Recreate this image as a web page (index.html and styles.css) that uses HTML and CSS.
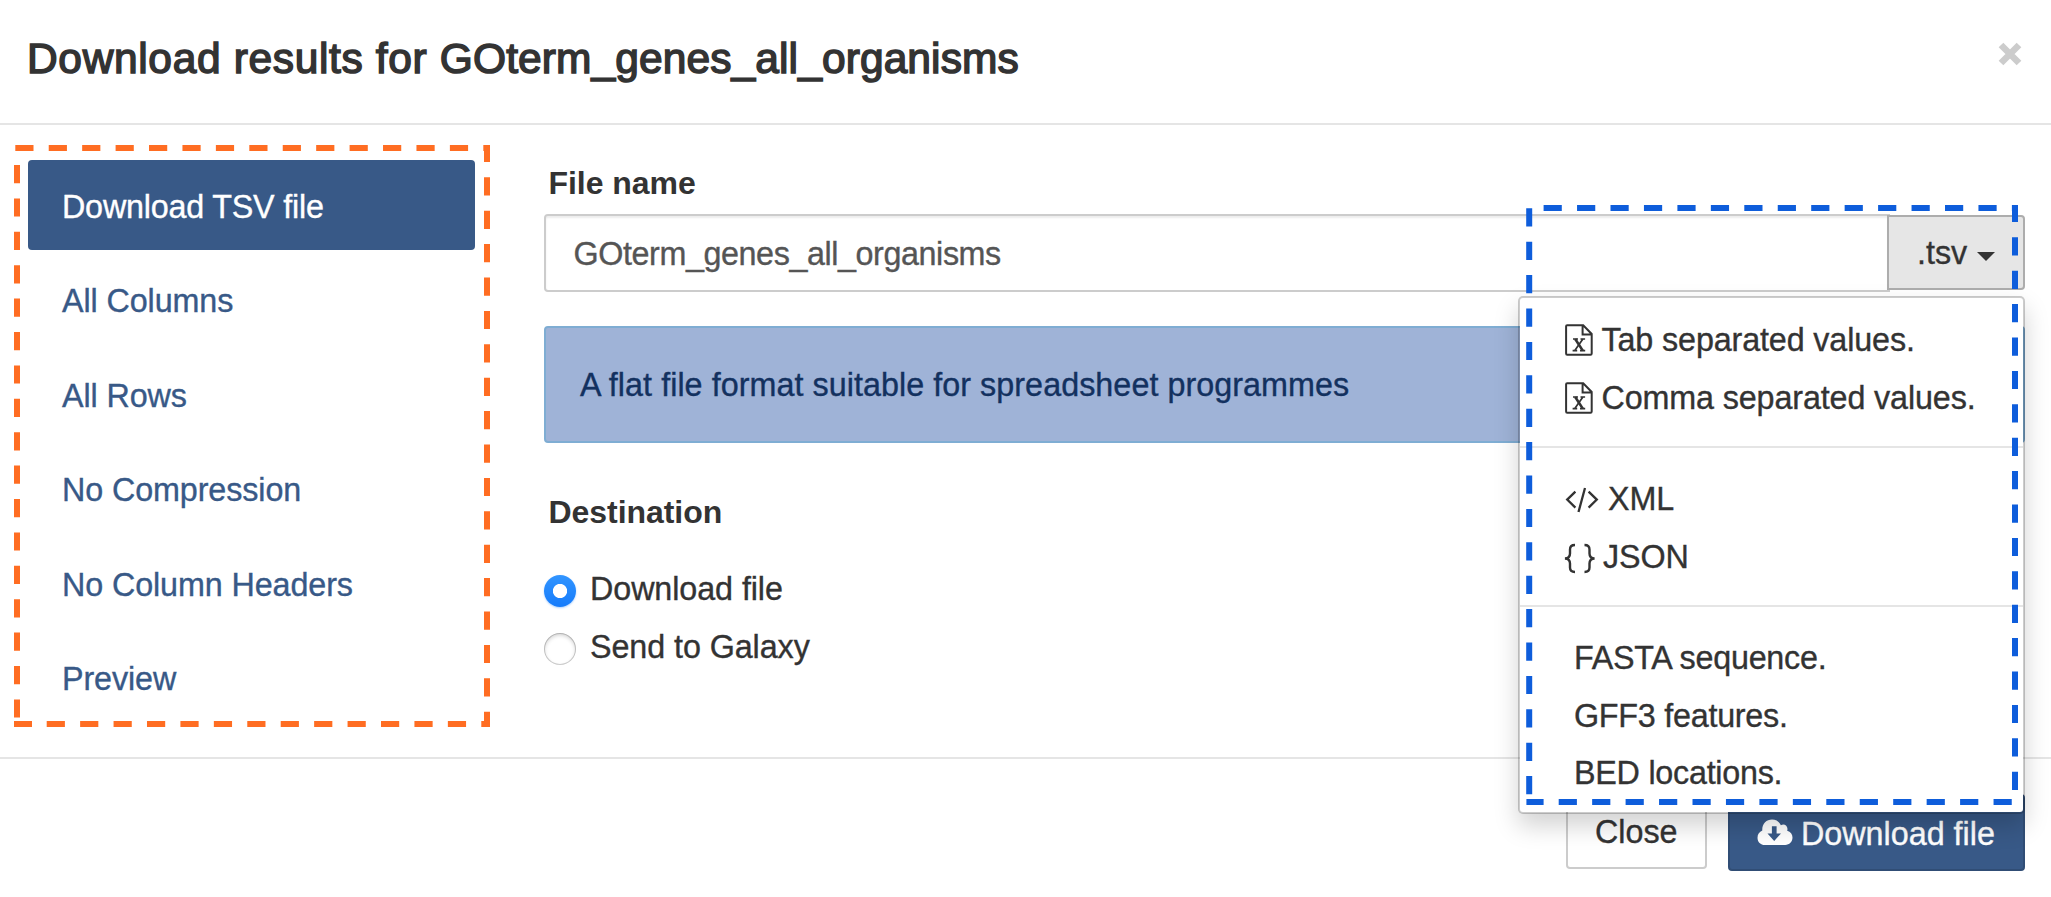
FILE: index.html
```html
<!DOCTYPE html>
<html lang="en">
<head>
<meta charset="utf-8">
<title>Download results</title>
<link rel="stylesheet" href="styles.css">
</head>
<body>
<div class="dialog">
  <header class="dialog-header">
    <h1 class="dialog-title">Download results for <span class="list-name">GOterm_genes_all_organisms</span></h1>
    <button class="dismiss" aria-label="Dismiss">
      <svg width="24" height="24" viewBox="0 0 24 24"><path d="M3 3 21 21M21 3 3 21" stroke="#ccc" stroke-width="6.6" fill="none"/></svg>
    </button>
  </header>
  <main class="dialog-body">
    <nav class="options">
      <a class="option active">Download TSV file</a>
      <a class="option">All Columns</a>
      <a class="option">All Rows</a>
      <a class="option">No Compression</a>
      <a class="option">No Column Headers</a>
      <a class="option">Preview</a>
    </nav>
    <section class="settings">
      <div class="label">File name</div>
      <div class="input-group">
        <div class="filename">GOterm_genes_all_organisms</div>
        <div class="format">
          <button class="format-toggle"><span class="ext">.tsv</span><span class="caret"></span></button>
          <ul class="menu">
            <li><svg class="icon-file" width="28" height="32" viewBox="0 0 28 32"><path d="M2.2 1.2h16l8.5 8.8v19.6q0 1.2-1.2 1.2H2.2Q1.1 30.8 1.1 29.6V2.3q0-1.1 1.1-1.1zM17.6 1.2v9.4h9" fill="none" stroke="#333" stroke-width="2"/><path d="M8 15h5M15.500 15h4.600M7.600 26.600h4.600M15 26.600h5.200M17.900 15 9.800 26.600" fill="none" stroke="#333" stroke-width="1.700"/><path d="M10.200 15 17.800 26.600" fill="none" stroke="#333" stroke-width="2.600"/></svg><span>Tab separated values.</span></li>
            <li><svg class="icon-file" width="28" height="32" viewBox="0 0 28 32"><path d="M2.2 1.2h16l8.5 8.8v19.6q0 1.2-1.2 1.2H2.2Q1.1 30.8 1.1 29.6V2.3q0-1.1 1.1-1.1zM17.6 1.2v9.4h9" fill="none" stroke="#333" stroke-width="2"/><path d="M8 15h5M15.500 15h4.600M7.600 26.600h4.600M15 26.600h5.200M17.900 15 9.800 26.600" fill="none" stroke="#333" stroke-width="1.700"/><path d="M10.200 15 17.800 26.600" fill="none" stroke="#333" stroke-width="2.600"/></svg><span>Comma separated values.</span></li>
            <li class="divider"></li>
            <li><svg class="icon-code" width="34" height="26" viewBox="0 0 34 26"><path d="M10.400 4.600 2.200 12.600l8.200 8M23.600 4.600l8.200 8-8.200 8M20 1 13.500 25" fill="none" stroke="#333" stroke-width="2.300"/></svg><span>XML</span></li>
            <li><svg class="icon-braces" width="32" height="31" viewBox="0 0 32 31"><path d="M11 2C7.200 2 6 3.400 6 6.500V10.500C6 13.700 4.500 15.200 1 15.500 4.500 15.800 6 17.300 6 20.500V24.500C6 27.600 7.200 29 11 29M20.500 2C24.300 2 25.500 3.400 25.500 6.500V10.500C25.500 13.700 27 15.200 30.500 15.500 27 15.800 25.500 17.300 25.500 20.500V24.500C25.500 27.600 24.300 29 20.500 29" fill="none" stroke="#333" stroke-width="2.400"/></svg><span>JSON</span></li>
            <li class="divider"></li>
            <li class="plain">FASTA sequence.</li>
            <li class="plain">GFF3 features.</li>
            <li class="plain">BED locations.</li>
          </ul>
        </div>
      </div>
      <div class="notice">A flat file format suitable for spreadsheet programmes</div>
      <div class="label destination">Destination</div>
      <div class="radios">
        <label class="radio"><span class="dot checked"></span>Download file</label>
        <label class="radio"><span class="dot"></span>Send to Galaxy</label>
      </div>
    </section>
  </main>
  <footer class="dialog-footer">
    <button class="btn">Close</button>
    <button class="btn primary">
      <svg width="36" height="27" viewBox="0 0 36 27"><path fill="#fff" d="M8 26C3.500 26 0.500 23 0.500 18.700 0.500 15.300 2.400 12.700 5.300 11.500 4.800 5 9.300 0.500 15 0.500 19.200 0.500 22.300 2.700 23.900 6.200 27.600 4 31.600 7.500 30.200 11.700 33.600 12.600 35.500 15.300 35.500 18.600 35.500 22.800 32.400 26 28.200 26z"/><path fill="#385987" d="M14.900 7.300h4.700v7.200h4.400L17.200 22 10.500 14.500h4.400z"/></svg>
      <span>Download file</span>
    </button>
  </footer>
  <svg class="highlights" width="2051" height="897" viewBox="0 0 2051 897" fill="none" stroke-width="6">
    <g stroke="#ff6d22">
      <path d="M15.300 148H490" stroke-dasharray="18.200 15.230"/>
      <path d="M487 145V162"/>
      <path d="M487 177.300V727" stroke-dasharray="18.200 15.200"/>
      <path d="M14 724H32"/>
      <path d="M46.700 724H490" stroke-dasharray="18.200 15.230"/>
      <path d="M17 165V718" stroke-dasharray="18.200 15.200"/>
    </g>
    <g stroke="#0e5ddb">
      <path d="M1543.600 208H2018" stroke-dasharray="18.200 15.250"/>
      <path d="M2015 205V222"/>
      <path d="M2015 237.300V791" stroke-dasharray="18.200 15.200"/>
      <path d="M1526.400 802H1543.600"/>
      <path d="M1558.700 802H2012" stroke-dasharray="18.200 15.250"/>
      <path d="M1529.200 208.300V795" stroke-dasharray="18.200 15.200"/>
    </g>
  </svg>
</div>
</body>
</html>
```
FILE: styles.css
```css
* { box-sizing: border-box; }
body {
  margin: 0;
  background: #fff;
  color: #333;
  font: 32.3px/46px "Liberation Sans", Arial, sans-serif;
  -webkit-text-stroke: 0.35px currentColor;
}
button { font: inherit; color: inherit; letter-spacing: inherit; margin: 0; }
.dialog {
  position: relative;
  display: flex;
  flex-direction: column;
  height: 897px;
  overflow: hidden;
}
.dialog-header {
  display: flex;
  justify-content: space-between;
  height: 125px;
  padding: 29px 29px 0 27px;
  border-bottom: 2px solid #e5e5e5;
}
.dialog-title {
  margin: 0;
  font-size: 42.5px;
  line-height: 60px;
  font-weight: 400;
  letter-spacing: 0.65px;
  -webkit-text-stroke: 1.5px #333;
}
.list-name { letter-spacing: 0.1px; }
.dismiss {
  display: flex;
  padding: 13px 0 0;
  border: 0;
  background: none;
  height: 38px;
}
.dialog-body {
  display: flex;
  gap: 69px;
  height: 634px;
  padding: 35px 26px 0 28px;
  border-bottom: 2px solid #e5e5e5;
}
.options {
  display: flex;
  flex-direction: column;
  gap: 4.4px;
  width: 447px;
}
.option {
  height: 90px;
  padding: 24px 34px 20px;
  border-radius: 4px;
  color: #385987;
  letter-spacing: -0.1px;
}
.option.active { background: #385987; color: #fff; letter-spacing: -0.2px; }
.settings { flex: 1; }
.label {
  padding-left: 4.500px;
  font-weight: 700;
  font-size: 32px;
  letter-spacing: -0.05px;
  -webkit-text-stroke: 0;
}
.input-group { display: flex; margin-top: 8px; }
.filename {
  flex: 1;
  height: 78px;
  padding: 15px 27.500px;
  margin-right: -3px;
  border: 2px solid #ccc;
  border-radius: 4px 0 0 4px;
  box-shadow: inset 0 2px 2px rgba(0, 0, 0, 0.075);
  color: #555;
  letter-spacing: -0.41px;
}
.format { position: relative; padding-top: 1px; }
.format-toggle {
  display: flex;
  width: 138px;
  height: 75px;
  padding: 13px 0 0 28px;
  border: 2px solid #adadad;
  border-radius: 0 4px 4px 0;
  background: #e6e6e6;
}
.caret {
  margin: 22px 0 0 10px;
  width: 0;
  height: 0;
  border: 9px solid transparent;
  border-top-color: #333;
  border-bottom: 0;
}
.menu {
  position: absolute;
  z-index: 2;
  top: 82px;
  right: 0;
  width: 507px;
  height: 518px;
  margin: 0;
  padding: 14px 0 0;
  list-style: none;
  background: #fff;
  background-clip: padding-box;
  border: 2px solid rgba(0, 0, 0, 0.2);
  border-radius: 5px;
  box-shadow: 0 12px 24px rgba(0, 0, 0, 0.175);
  white-space: nowrap;
  letter-spacing: -0.13px;
}
.menu li {
  display: flex;
  align-items: flex-start;
  height: 57.500px;
  padding-left: 45px;
  line-height: 57.500px;
}
.menu li.divider {
  height: 2px;
  margin: 19px 0 23px;
  padding: 0;
  background: #e5e5e5;
}
.menu li.plain { padding-left: 54px; letter-spacing: -0.25px; }
.icon-file { margin: 12px 8.500px 0 0; }
.icon-code { margin: 16px 9px 0 0; }
.icon-braces { margin: 14px 7px 0 -1px; }
.notice {
  height: 117px;
  margin: 34px 0 46px;
  padding: 34px;
  border: 2px solid #7fadd3;
  border-radius: 4px;
  background: #9fb3d7;
  color: #13315f;
  letter-spacing: 0.05px;
}
.radios { margin-top: 31px; }
.radio {
  display: flex;
  gap: 14px;
  height: 58px;
  letter-spacing: -0.08px;
}
.dot {
  width: 32px;
  height: 32px;
  margin-top: 9px;
  border-radius: 50%;
  background: #fff;
  box-shadow: inset 0 0 0 1px rgba(0, 0, 0, 0.18), inset 0 2px 4px rgba(0, 0, 0, 0.2);
}
.dot.checked {
  background: radial-gradient(circle, #fff 6.700px, transparent 7.500px), linear-gradient(#3295ff, #157bfb);
  box-shadow: 0 1px 2px rgba(21, 123, 251, 0.35);
}
.dialog-footer {
  display: flex;
  justify-content: flex-end;
  align-items: flex-start;
  gap: 21px;
  padding: 35px 26px 0;
}
.btn {
  display: flex;
  width: 141px;
  height: 75px;
  padding: 13px 26px 13px 27px;
  border: 2px solid #ccc;
  border-radius: 4px;
  background: #fff;
}
.btn.primary {
  width: 297px;
  height: 77px;
  padding: 15px 26px 15px 27px;
  border-color: #304d75;
  background: #385987;
  color: #fff;
  gap: 8px;
  white-space: nowrap;
}
.btn svg { flex: none; margin-top: 8px; }
.highlights { position: absolute; z-index: 3; left: 0; top: 0; pointer-events: none; }
```
